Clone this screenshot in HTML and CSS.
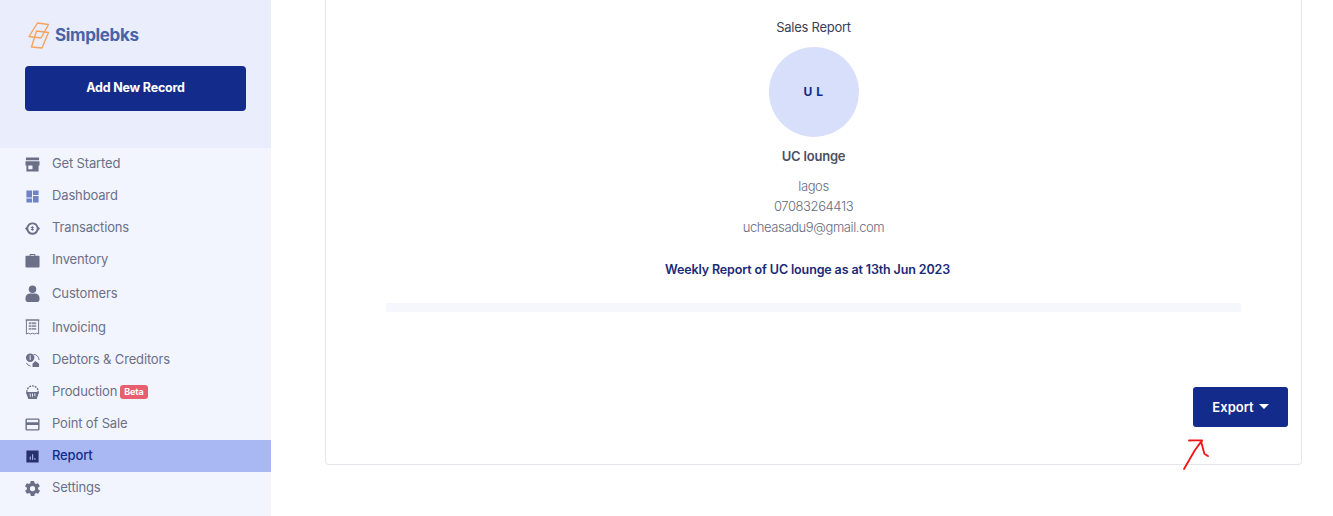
FILE: index.html
```html
<!DOCTYPE html>
<html lang="en">
<head>
<meta charset="utf-8">
<title>Simplebks Report</title>
<link rel="stylesheet" href="styles.css">
</head>
<body>
<div class="app">
  <aside class="sidebar">
    <div class="side-top">
      <div class="logo">
        <svg class="logo-mark" viewBox="0 0 22 27" width="22" height="27" fill="none" stroke="#F7A35C" stroke-width="1.400" stroke-linejoin="round">
          <path d="M9.500 1l11 1.500L13 16 1 14.500z"/>
          <path d="M8.500 9l12 1.500L14 26 3.500 25z"/>
        </svg>
        <span class="logo-text">Simplebks</span>
      </div>
      <button class="add-btn">Add New Record</button>
    </div>
    <nav class="nav">
      <a class="nav-item"><svg class="ico" viewBox="0 0 16 16"><path d="M1 .5h14v3H1zM.5 4.500h15V9h-1v6.500h-13V9h-1zM3.500 9v4H8V9z" fill-rule="evenodd"/></svg><span>Get Started</span></a>
      <a class="nav-item"><svg class="ico dash" viewBox="0 0 16 16"><path d="M1.500 1.500h6v7.500h-6zM1.500 10h6v4.500h-6zM8.500 1.500h6v5h-6zM8.500 7.500h6v7h-6z"/></svg><span>Dashboard</span></a>
      <a class="nav-item"><svg class="ico" viewBox="0 0 16 16"><path d="M8 1.500A6.500 6.500 0 0 1 14.200 6L16 8l-1.800 2A6.500 6.500 0 0 1 1.800 10L0 8l1.800-2A6.500 6.500 0 0 1 8 1.500zm0 2a4.500 4.500 0 1 0 0 9 4.500 4.500 0 0 0 0-9z" fill-rule="evenodd"/><path d="M7.300 5.500h1.400v5H7.300zM6.300 6.500h3v1h-3zM6.300 8.500h3v1h-3z"/></svg><span>Transactions</span></a>
      <a class="nav-item"><svg class="ico" viewBox="0 0 16 16"><path d="M5 3V1h6v2h3.500a1 1 0 0 1 1 1v10.500a1 1 0 0 1-1 1h-13a1 1 0 0 1-1-1V4a1 1 0 0 1 1-1zm1 0h4V2.200H6z" fill-rule="evenodd"/></svg><span>Inventory</span></a>
      <a class="nav-item customers"><svg class="ico tall-ico" viewBox="0 0 16 18"><circle cx="8" cy="4.500" r="4"/><path d="M.5 14a5 5 0 0 1 5-5h5a5 5 0 0 1 5 5v1a3 3 0 0 1-3 3h-9a3 3 0 0 1-3-3z"/></svg><span>Customers</span></a>
      <a class="nav-item invoicing"><svg class="ico tall-ico" viewBox="0 0 16 18"><path d="M1.500 1h13v15l-2.200-1-2 1-2.300-1-2.300 1-2-1-2.200 1z" fill="none" stroke="#6B7088"/><path d="M.5.500h15v1H.5z"/><path d="M4 3.500h2.500v2H4zM7 3.500h5v2H7zM4 6.500h2.500v2H4zM7 6.500h5v2H7zM4 9.500h2.500v2H4zM7 9.500h5v2H7z" opacity=".75"/></svg><span>Invoicing</span></a>
      <a class="nav-item"><svg class="ico" viewBox="0 0 16 16"><path d="M5.500.5a4.500 4.500 0 1 1 0 9 4.500 4.500 0 0 1 0-9zM5 2.500v5h1v-5z" fill-rule="evenodd"/><path d="M9 1.500a6 6 0 0 1 6 6M1.500 10.500a6 6 0 0 0 4.500 3.500" fill="none" stroke="#6B7088"/><path d="M11 8.500l4 3v3.500H8v-3.500z"/></svg><span>Debtors &amp; Creditors</span></a>
      <a class="nav-item"><svg class="ico" viewBox="0 0 16 16"><circle cx="8" cy="7" r="6" fill="none" stroke="#6B7088" stroke-width="1.400" stroke-dasharray="2 1"/><path d="M1 7.500h14l-2.500 7.500h-9zM5 9v4h1V9zM7.500 9v4h1V9zM10 9v4h1V9z" fill-rule="evenodd"/></svg><span>Production</span><span class="beta">Beta</span></a>
      <a class="nav-item"><svg class="ico" viewBox="0 0 16 16"><path d="M2 1.500h12A1.500 1.500 0 0 1 15.500 3v10a1.500 1.500 0 0 1-1.500 1.500H2A1.500 1.500 0 0 1 .5 13V3A1.500 1.500 0 0 1 2 1.500zM2 3v2.500h12V3zM2 8.500V13h12V8.500z" fill-rule="evenodd"/></svg><span>Point of Sale</span></a>
      <a class="nav-item active"><svg class="ico report" viewBox="0 0 16 16"><path d="M1.500 1.500h13v13h-13zM5 8v3.500h1.200V8zM7.500 5.500v6h1.200v-6zM10 9.500v2h1.200v-2z" fill-rule="evenodd"/></svg><span>Report</span></a>
      <a class="nav-item"><svg class="ico" viewBox="2 2 20 20"><path d="M19.400 13a7.500 7.500 0 0 0 0-2l2.100-1.600a.5.500 0 0 0 .1-.6l-2-3.500a.5.500 0 0 0-.6-.2l-2.500 1a7.300 7.300 0 0 0-1.700-1l-.4-2.600a.5.500 0 0 0-.5-.5h-4a.5.500 0 0 0-.5.400l-.4 2.700a7.300 7.300 0 0 0-1.700 1l-2.500-1a.5.500 0 0 0-.6.200l-2 3.500a.5.500 0 0 0 .1.600L4.600 11a7.500 7.500 0 0 0 0 2l-2.100 1.600a.5.500 0 0 0-.1.600l2 3.500a.5.500 0 0 0 .6.200l2.500-1a7.300 7.300 0 0 0 1.700 1l.4 2.700a.5.500 0 0 0 .5.400h4a.5.500 0 0 0 .5-.4l.4-2.700a7.300 7.300 0 0 0 1.700-1l2.500 1a.5.500 0 0 0 .6-.2l2-3.500a.5.500 0 0 0-.1-.6zM12 15.500a3.500 3.500 0 1 1 0-7 3.500 3.500 0 0 1 0 7z" fill-rule="evenodd"/></svg><span>Settings</span></a>
    </nav>
  </aside>
  <main class="main">
    <section class="card">
      <div class="report-head">
        <p class="title">Sales Report</p>
        <div class="avatar">U L</div>
        <h2 class="biz">UC lounge</h2>
        <p class="line">lagos</p>
        <p class="line">07083264413</p>
        <p class="line email">ucheasadu9@gmail.com</p>
        <p class="weekly">Weekly Report of UC lounge as at 13th Jun 2023</p>
      </div>
      <div class="table-strip"></div>
      <div class="actions">
        <button class="export">Export<span class="caret"></span></button>
        <svg class="arrow" viewBox="0 0 34 38" width="34" height="38" fill="none" stroke="#F01414" stroke-width="1.800" stroke-linecap="round" stroke-linejoin="round">
          <path d="M4 34C8 27 11 22 15 15c3-4 5-7 7-9M9 5.500c4 0 9-.5 13 0M21 6c1 4 2 8 3.500 13 1 .5 2.500 1.500 3.500 2"/>
        </svg>
      </div>
    </section>
  </main>
</div>
</body>
</html>
```
FILE: styles.css
```css
* { box-sizing: border-box; }
html, body { margin: 0; height: 100%; overflow: hidden; background: #fff; }
body { font-family: "Inter", "Liberation Sans", sans-serif; }
p, h2 { margin: 0; }

.app { display: flex; height: 516px; }

.sidebar { width: 271px; flex: none; background: #F2F5FE; }
.side-top { height: 148px; background: #E9EDFC; padding: 20px 25px 0; }
.logo { display: flex; align-items: center; gap: 5px; height: 30px; margin: 0 0 16px 3px; }
.logo-mark { flex: none; margin-top: 1px; }
.logo-text { font-size: 17px; font-weight: 700; color: #4A62A8; letter-spacing: -.35px; }
.add-btn {
  display: block; width: 221px; height: 45px; border: 0; border-radius: 4px; padding: 0 0 3px;
  background: #132B8A; color: #fff; font: 700 12.500px "Inter", sans-serif; letter-spacing: -.2px;
}

.nav { display: flex; flex-direction: column; }
.nav-item {
  display: flex; align-items: center; height: 32px; padding-left: 25px;
  color: #6B7088; font-size: 13px; letter-spacing: -.15px;
}
.nav-item span:not(.beta) { margin-top: -2px; }
.nav-item.customers { height: 35px; }
.nav-item.invoicing { height: 33px; }
.nav-item .ico { width: 15px; height: 15px; margin-right: 12px; fill: #6B7088; flex: none; }
.nav-item .ico.tall-ico { height: 17px; }
.nav-item .ico.dash { fill: #6F82C4; }
.nav-item.active { background: #A9B8F2; color: #132B8A; font-weight: 500; }
.nav-item .ico.report { fill: #27306B; }
.beta {
  margin-left: 3px; padding: 1px 4px; border-radius: 3px;
  background: #E8606F; color: #fff; font-size: 9px; font-weight: 700; line-height: 12px;
}

.main { flex: 1; padding-right: 31px; padding-left: 54px; }
.card {
  height: 465px; border: 1px solid #E3E7EC; border-top: 0; border-radius: 0 0 4px 4px;
  display: flex; flex-direction: column;
}
.report-head { display: flex; flex-direction: column; align-items: center; padding-top: 19px; }
.title { font-size: 13px; line-height: 16px; color: #3A3F57; letter-spacing: -.25px; }
.avatar {
  width: 90px; height: 90px; border-radius: 50%; margin-top: 12px;
  background: #D8DFFA; color: #132B8A; font-size: 12px; font-weight: 700; letter-spacing: .6px;
  display: flex; align-items: center; justify-content: center; padding-bottom: 2px;
}
.biz { margin-top: 11px; margin-bottom: 12px; font-size: 13px; line-height: 16px; font-weight: 600; color: #4B5064; letter-spacing: -.2px; }
.line { font-size: 13px; line-height: 20px; color: #666A7E; letter-spacing: -.4px; font-weight: 300; }
.line.email { margin-top: 1px; }
.weekly { margin: 25px 12px 0 0; font-size: 12.500px; line-height: 16px; font-weight: 600; color: #1A2A78; letter-spacing: -.13px; }
.table-strip { height: 9px; margin: 25px 60px 0; background: #F6F7FC; }
.actions { position: relative; flex: 1; display: flex; justify-content: flex-end; align-items: flex-start; padding: 75px 13px 0 0; }
.export {
  width: 95px; height: 40px; border: 0; border-radius: 3px; padding: 0 0 1px;
  background: #132B8A; color: #fff; font: 600 13px "Inter", sans-serif;
  display: flex; align-items: center; justify-content: center;
}
.caret {
  margin-left: 5px; width: 0; height: 0;
  border-left: 5px solid transparent; border-right: 5px solid transparent; border-top: 5px solid #fff;
}
.arrow { position: absolute; left: 854px; top: 123px; }
```
